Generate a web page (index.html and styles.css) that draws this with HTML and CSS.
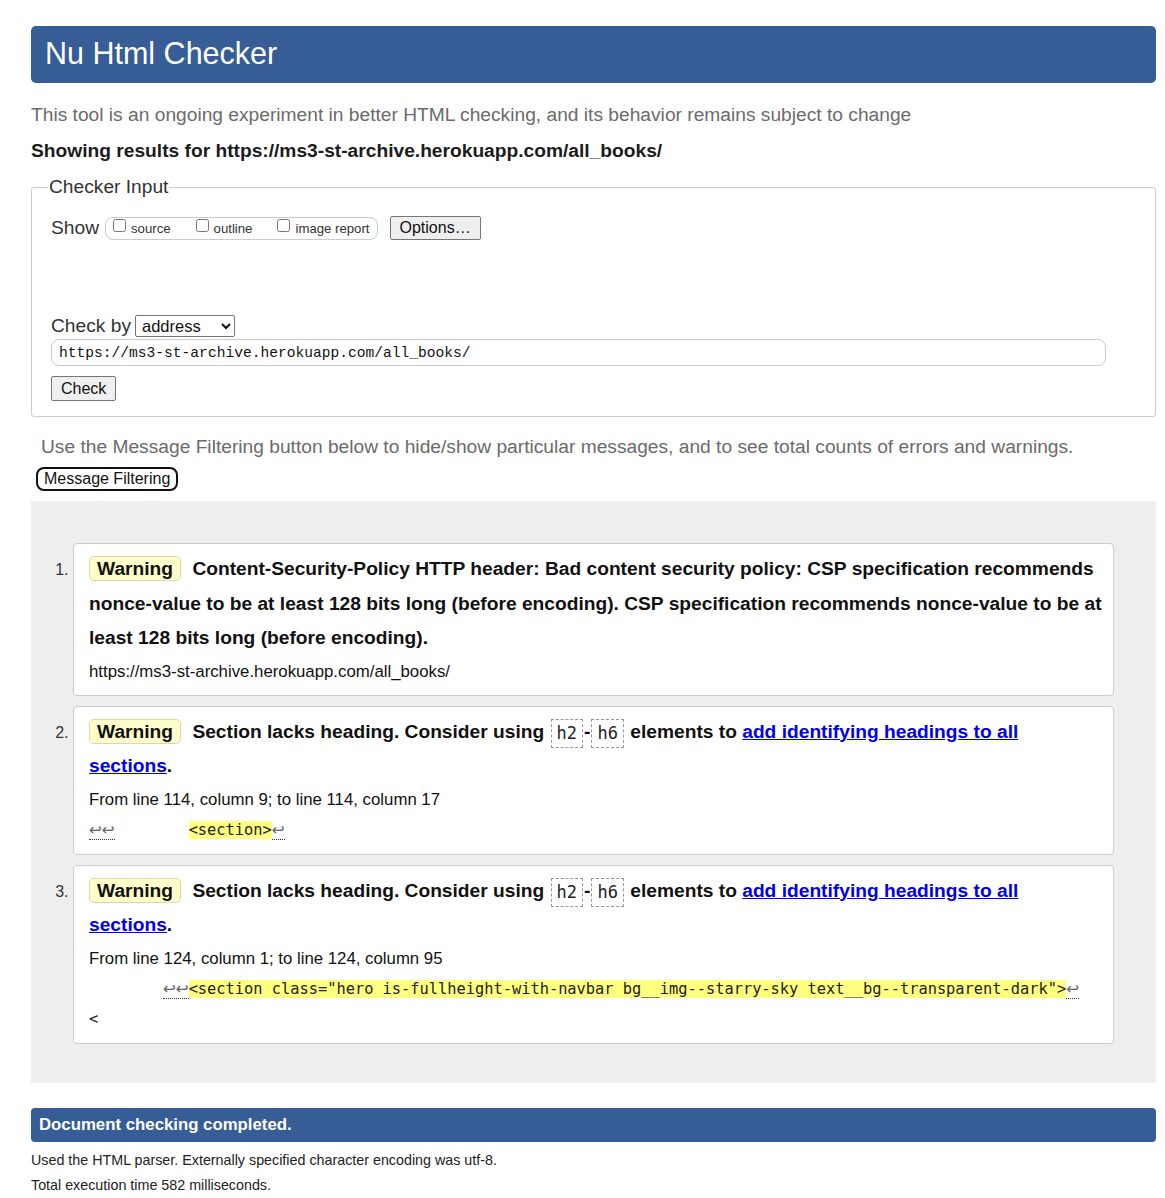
FILE: index.html
```html
<!DOCTYPE html>
<html lang="en">
<head>
<meta charset="utf-8">
<title>Nu Html Checker</title>
<link rel="stylesheet" href="styles.css">
</head>
<body>
<h1 class="title">Nu Html Checker</h1>
<p class="intro">This tool is an ongoing experiment in better HTML checking, and its behavior remains subject to change</p>
<p class="showing">Showing results for https://ms3-st-archive.herokuapp.com/all_books/</p>

<fieldset class="checker">
  <legend class="legend">Checker Input</legend>
  <div class="show-row">
    <span class="show-label">Show</span>
    <span class="cb-group">
      <label class="cb"><input type="checkbox">source</label>
      <label class="cb"><input type="checkbox">outline</label>
      <label class="cb"><input type="checkbox">image report</label>
    </span>
    <button class="btn opt">Options…</button>
  </div>
  <div class="checkby-row">
    <span class="checkby-label">Check by</span>
    <select class="sel"><option>address</option></select>
  </div>
  <input class="url" type="text" value="https://ms3-st-archive.herokuapp.com/all_books/">
  <div class="check-row"><button class="btn check">Check</button></div>
</fieldset>

<p class="filter-note">Use the Message Filtering button below to hide/show particular messages, and to see total counts of errors and warnings.</p>
<button class="filter-btn">Message Filtering</button>

<div class="results">
  <ol class="messages">
    <li class="msg">
      <p class="msg-text"><span class="badge">Warning</span> <span>Content-Security-Policy HTTP header: Bad content security policy: CSP specification recommends nonce-value to be at least 128 bits long (before encoding). CSP specification recommends nonce-value to be at least 128 bits long (before encoding).</span></p>
      <p class="loc">https://ms3-st-archive.herokuapp.com/all_books/</p>
    </li>
    <li class="msg">
      <p class="msg-text"><span class="badge">Warning</span> <span>Section lacks heading. Consider using <code class="el">h2</code>-<code class="el">h6</code> elements to <a href="#" class="link">add identifying headings to all sections</a>.</span></p>
      <p class="loc">From line 114, column 9; to line 114, column 17</p>
      <p class="extract"><span class="lf">↩↩</span>        <mark class="hl">&lt;section&gt;</mark><span class="lf">↩</span></p>
    </li>
    <li class="msg">
      <p class="msg-text"><span class="badge">Warning</span> <span>Section lacks heading. Consider using <code class="el">h2</code>-<code class="el">h6</code> elements to <a href="#" class="link">add identifying headings to all sections</a>.</span></p>
      <p class="loc">From line 124, column 1; to line 124, column 95</p>
      <p class="extract">        <span class="lf">↩↩</span><mark class="hl">&lt;section class="hero is-fullheight-with-navbar bg__img--starry-sky text__bg--transparent-dark"&gt;</mark><span class="lf">↩</span>
&lt;</p>
    </li>
  </ol>
</div>

<div class="done">Document checking completed.</div>
<p class="details">Used the HTML parser. Externally specified character encoding was utf-8.</p>
<p class="details">Total execution time 582 milliseconds.</p>
</body>
</html>
```

FILE: styles.css
```css
html, body {
  margin: 0;
  padding: 0;
  background: #fff;
}
body {
  padding: 26px 9px 0 31px;
  font-family: "Liberation Sans", Arial, sans-serif;
  color: #222;
}
.title {
  margin: 0;
  background: #365d95;
  color: #fff;
  font-weight: normal;
  font-size: 30.5px;
  height: 57px;
  line-height: 55px;
  padding: 0 14px;
  border-radius: 5px;
}
.intro {
  margin: 21px 0 0;
  font-size: 19.2px;
  line-height: 22px;
  color: #6b6b6b;
}
.showing {
  margin: 14px 0 0;
  font-size: 19.2px;
  line-height: 22px;
  font-weight: bold;
  color: #1b1b1b;
}
.checker {
  margin: 14px 0 0;
  border: 1px solid #ccc;
  border-radius: 3px;
  padding: 17px 19px 15px 19px;
  min-width: 0;
}
.legend {
  font-size: 19.2px;
  color: #333;
  padding: 0 1px;
  margin-left: -3px;
}
.show-row {
  display: flex;
  align-items: center;
  height: 26px;
}
.show-label {
  font-size: 19.2px;
  color: #333;
  margin-right: 6px;
}
.cb-group {
  display: inline-flex;
  align-items: center;
  border: 1px solid #ccc;
  border-radius: 8px;
  height: 21px;
  padding: 0 7px 0 6px;
  gap: 24px;
}
.cb {
  font-size: 13.2px;
  color: #333;
  display: inline-flex;
  align-items: center;
}
.cb input {
  margin: 0 5px 5px 1px;
  width: 13px;
  height: 13px;
}
.btn {
  font-family: "Liberation Sans", Arial, sans-serif;
  font-size: 16px;
  color: #111;
  background: #efefef;
  border: 1px solid #767676;
  border-radius: 2px;
  padding: 0 9px;
  height: 24px;
}
.opt {
  margin-left: 12px;
}
.checkby-row {
  display: flex;
  align-items: center;
  margin-top: 73px;
  height: 24px;
}
.checkby-label {
  font-size: 19.2px;
  color: #333;
  margin-right: 4px;
}
.sel {
  font-family: "Liberation Sans", Arial, sans-serif;
  font-size: 16.5px;
  width: 100px;
  height: 22px;
  border: 1px solid #767676;
  border-radius: 2px;
  background: #fff;
  color: #111;
  padding: 0 2px;
}
.url {
  display: block;
  box-sizing: border-box;
  margin-top: 1px;
  width: 1055px;
  height: 27px;
  border: 1px solid #ccc;
  border-radius: 8px;
  padding: 0 7px;
  font-family: "Liberation Mono", monospace;
  font-size: 14.6px;
  color: #111;
}
.check-row {
  margin-top: 10px;
}
.btn.check {
  height: 25px;
  padding: 0 9px;
}
.filter-note {
  margin: 19px 0 0 10px;
  font-size: 19.2px;
  line-height: 22px;
  color: #6b6b6b;
}
.filter-btn {
  display: block;
  margin: 9px 0 0 5px;
  font-family: "Liberation Sans", Arial, sans-serif;
  font-size: 16px;
  background: #fff;
  color: #111;
  border: 2px solid #111;
  border-radius: 8px;
  height: 24px;
  padding: 0 6px;
}
.results {
  margin-top: 10px;
  background: #eee;
  padding: 42px 42px 39px 42px;
}
.messages {
  margin: 0;
  padding: 0;
  display: flex;
  flex-direction: column;
  gap: 10px;
}
.msg {
  display: list-item;
  list-style-position: outside;
  background: #fff;
  border: 1px solid #ccc;
  border-radius: 4px;
  padding: 8px 9px 11px 15px;
  font-size: 16px;
  color: #333;
}
.msg::marker {
  color: #333;
  font-size: 16px;
}
.msg-text {
  margin: 0;
  font-size: 19.2px;
  line-height: 34.5px;
  font-weight: bold;
  color: #111;
}
.badge {
  display: inline-block;
  background: #ffffcc;
  border: 1px solid #d9d9a8;
  border-radius: 5px;
  padding: 0 7px;
  line-height: 23px;
  margin-right: 6px;
}
.el {
  display: inline-block;
  font-family: "DejaVu Sans Mono", monospace;
  font-weight: normal;
  font-size: 17px;
  line-height: 27px;
  border: 1px dashed #999;
  padding: 0 5px;
  color: #222;
  margin: 0 1px;
  vertical-align: -1px;
}
.link {
  color: #0000ee;
  text-decoration: underline;
}
.loc {
  margin: 4px 0 0;
  font-size: 16.8px;
  line-height: 24px;
  color: #111;
}
.extract {
  margin: 3px 0 -2px;
  white-space: pre;
  font-family: "DejaVu Sans Mono", monospace;
  font-size: 15.35px;
  line-height: 30px;
  color: #222;
}
.lf {
  font-family: "DejaVu Sans", sans-serif;
  border-bottom: 1px dotted #333;
  color: #666;
}
.hl {
  background: #ffff80;
  color: #222;
}
.done {
  margin-top: 25px;
  background: #365d95;
  color: #fff;
  font-weight: bold;
  font-size: 16.8px;
  height: 34px;
  line-height: 34px;
  padding: 0 8px;
  border-radius: 4px;
}
.details {
  margin: 0;
  font-size: 14.3px;
  line-height: 25px;
  color: #222;
}
.done + .details {
  margin-top: 6px;
}
```
